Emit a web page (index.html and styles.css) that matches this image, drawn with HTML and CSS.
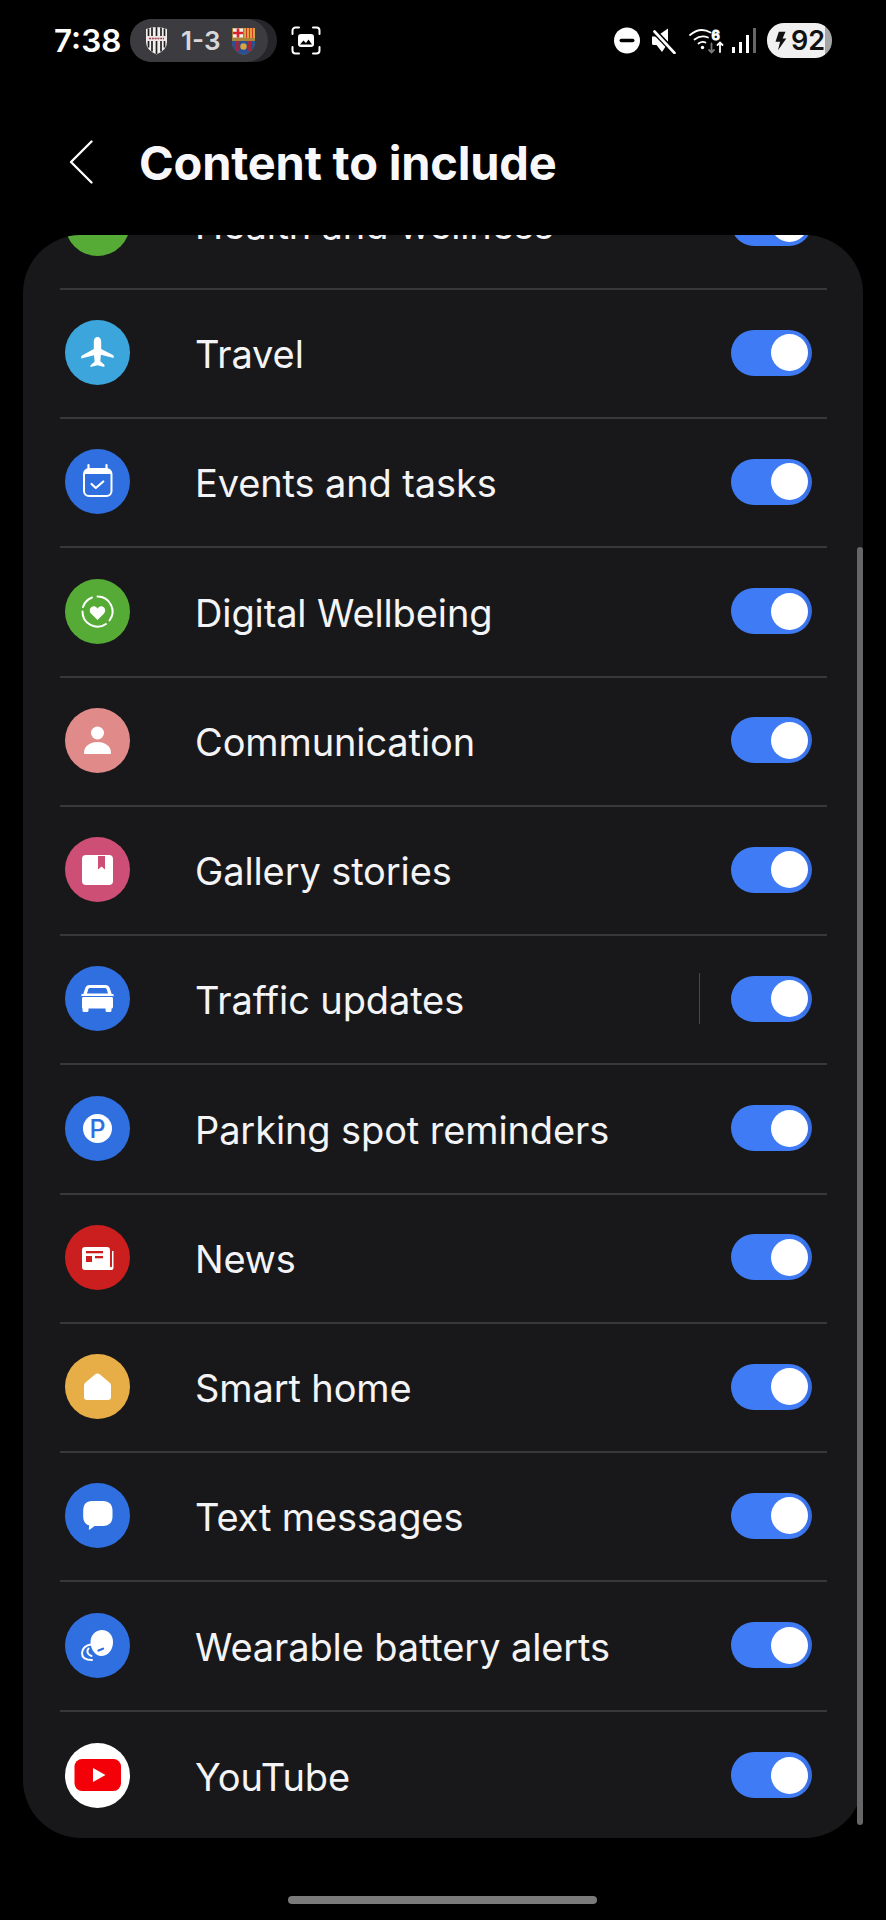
FILE: index.html
```html
<!DOCTYPE html>
<html lang="en">
    <head>
        <meta charset="UTF-8">
        <meta name="viewport" content="width=device-width, initial-scale=1.0">
        <title>Content to include</title>
        <link rel="stylesheet" href="styles.css">
    </head>

    <body>
        <div class="status-bar">
            <span class="time">7:38</span>
            <div class="score-pill">
                <div class="score-inner">
                    <svg class="crest" width="23" height="29" viewBox="0 0 23 29">
                        <path d="M1 3 Q11.5 -1 22 3 V16 Q22 24 11.5 28.5 Q1 24 1 16 Z" fill="#f4f0f0"/>
                        <path d="M3.5 2.5v19M7 1.5v24M11.5 1v27M16 1.5v24M19.5 2.5v19" stroke="#222" stroke-width="1.7"/>
                        <rect x="1.5" y="10" width="20" height="5" fill="#efe3e3"/>
                        <path d="M4 12.5h15" stroke="#a04050" stroke-width="1.6" stroke-dasharray="2 .8"/>
                    </svg>
                    <span class="score">1-3</span>
                    <svg class="crest" width="25" height="28" viewBox="0 0 25 28">
                        <path d="M1 1 H24 V15 Q24 24 12.5 28 Q1 24 1 15 Z" fill="#a8843a"/>
                        <rect x="2" y="1.5" width="10" height="9" fill="#f5f1ee"/>
                        <path d="M7 1.5v9M2 6h10" stroke="#d8242c" stroke-width="2.6"/>
                        <rect x="13.5" y="1" width="10" height="10" fill="#efc04a"/>
                        <path d="M15.5 1v10M18.5 1v10M21.5 1v10" stroke="#cf3a2a" stroke-width="1.5"/>
                        <path d="M1 14 H24 V16 Q24 24 12.5 28 Q1 24 1 16 Z" fill="#2a4f92"/>
                        <path d="M6 14v10M18.5 14v10" stroke="#a3263a" stroke-width="3.4"/>
                        <circle cx="12.5" cy="19.5" r="3.2" fill="#d9a63c"/>
                    </svg>
                </div>
            </div>
            <svg class="capture-icon" width="30" height="29" viewBox="0 0 30 29" fill="none" stroke="#fff" stroke-width="2" stroke-linecap="round">
                <path d="M1.5 8V4.5A3 3 0 0 1 4.500 1.500H8M22 1.500h3.500a3 3 0 0 1 3 3V8M28.500 21v3.500a3 3 0 0 1-3 3H22M8 27.500H4.500a3 3 0 0 1-3-3V21"/>
                <path d="M7 11a3 3 0 0 1 3-3h10a3 3 0 0 1 3 3v7a3 3 0 0 1-3 3H10a3 3 0 0 1-3-3z" fill="#fff" stroke="none"/>
                <path d="M9 18.500l3.500-4 2.500 2.500 2.500-3.500 3.500 5z" fill="#000" stroke="none"/>
            </svg>

            <div class="status-right">
                <svg width="26" height="27" viewBox="0 0 26 27">
                    <circle cx="13" cy="13.500" r="13" fill="#fff"/>
                    <rect x="5.500" y="11.800" width="15" height="3.400" rx="1.700" fill="#000"/>
                </svg>
                <svg class="mute-icon" width="25" height="26" viewBox="0 0 25 26">
                    <path d="M1 8.500h4.500L17 0.500V15L11 24 5.500 17H2.500A1.500 1.500 0 0 1 1 15.500z" fill="#fff"/>
                    <path d="M2 2L25 26" stroke="#000" stroke-width="5.500"/>
                    <path d="M3.500 3.500L23.500 25" stroke="#fff" stroke-width="2.600" stroke-linecap="round"/>
                </svg>
                <svg class="wifi-icon" width="36" height="26" viewBox="0 0 36 26" fill="none" stroke="#fff" stroke-linecap="round">
                    <path d="M1 7Q11 -1.500 21.500 4.500" stroke-width="1.800"/>
                    <path d="M5.500 11.500Q12 6.500 19 9.500" stroke-width="1.800"/>
                    <path d="M9.500 15.500Q13 13 16.500 14.500" stroke-width="1.800"/>
                    <circle cx="13.500" cy="19.500" r="1.700" fill="#fff" stroke="none"/>
                    <path d="M22.500 15.500v9M20 22l2.500 2.500 2.500-2.500" stroke="#777" stroke-width="1.800"/>
                    <path d="M31 24v-9.500M28.500 17l2.500-2.500 2.500 2.500" stroke-width="1.800"/>
                    <text x="22.500" y="12" class="wifi-six">6</text>
                </svg>
                <div class="signal">
                    <span class="bar bar-1"></span>
                    <span class="bar bar-2"></span>
                    <span class="bar bar-3"></span>
                    <span class="bar bar-4"></span>
                </div>
                <div class="battery">
                    <svg width="13" height="20" viewBox="0 0 14 24">
                        <path d="M5 1h8L9.500 9H14L4 23l2.500-10H1z" fill="#111"/>
                    </svg>
                    <span class="battery-text">92</span>
                </div>
            </div>
        </div>

        <div class="header">
            <svg class="back" width="24" height="44" viewBox="0 0 24 44" fill="none" stroke="#fff" stroke-width="2.300" stroke-linecap="round" stroke-linejoin="round">
                <path d="M22.500 1.500L2 22l20.500 20.500"/>
            </svg>
            <h1 class="title">Content to include</h1>
        </div>

        <div class="panel">
            <div class="list">
                <div class="row">
                    <div class="icon green"></div>
                    <span class="label">Health and wellness</span>
                    <div class="toggle"><div class="thumb"></div></div>
                </div>

                <div class="row">
                    <div class="icon sky">
                        <svg width="65" height="65" viewBox="0 0 65 65">
                            <path d="M32.500 17c-2.200 0-3.700 2-3.700 4.500V29L17 35.500c-.6.400-.8 1-.8 1.600v1.400l12.800-3.300.6 6.500-4.100 3.500V47l6.900-1.700L39.400 47v-2.300l-4.100-3.500.6-6.500 12.800 3.300v-1.400c0-.6-.2-1.200-.8-1.600L36.200 29v-7.500c0-2.500-1.500-4.500-3.700-4.500z" fill="#fff"/>
                        </svg>
                    </div>
                    <span class="label">Travel</span>
                    <div class="toggle"><div class="thumb"></div></div>
                </div>

                <div class="row">
                    <div class="icon blue">
                        <svg width="65" height="65" viewBox="0 0 65 65" fill="none">
                            <path d="M23.500 16v5M41.500 16v5" stroke="#fff" stroke-width="2.200" stroke-linecap="round"/>
                            <rect x="19" y="20" width="27.500" height="27" rx="5" stroke="#fff" stroke-width="2"/>
                            <path d="M19 25a5 5 0 0 1 5-5h17.500a5 5 0 0 1 5 5z" fill="#fff"/>
                            <path d="M26.500 35l4.300 4 7.500-6.500" stroke="#fff" stroke-width="2.200" stroke-linecap="round" stroke-linejoin="round"/>
                        </svg>
                    </div>
                    <span class="label">Events and tasks</span>
                    <div class="toggle"><div class="thumb"></div></div>
                </div>

                <div class="row">
                    <div class="icon green">
                        <svg width="65" height="65" viewBox="0 0 65 65" fill="none">
                            <path d="M32.500 17.500a15 15 0 0 1 12 24M41 45a15 15 0 0 1-23.500-12.500M18 28a15 15 0 0 1 9-9.500" stroke="#fff" stroke-width="2" stroke-linecap="round"/>
                            <path d="M32.500 41l-6.300-6.200c-3.400-3.600 0-8.500 3.800-7.300 1 .3 1.900 1 2.500 2 .6-1 1.500-1.700 2.500-2 3.800-1.200 7.200 3.700 3.800 7.300z" fill="#fff"/>
                        </svg>
                    </div>
                    <span class="label">Digital Wellbeing</span>
                    <div class="toggle"><div class="thumb"></div></div>
                </div>

                <div class="row">
                    <div class="icon rose">
                        <svg width="65" height="65" viewBox="0 0 65 65">
                            <circle cx="32.500" cy="25" r="6.500" fill="#fff"/>
                            <path d="M20 46c-.5 0-1-.4-1-1 0-7 6-11 13.500-11S46 38 46 45c0 .6-.5 1-1 1z" fill="#fff"/>
                        </svg>
                    </div>
                    <span class="label">Communication</span>
                    <div class="toggle"><div class="thumb"></div></div>
                </div>

                <div class="row">
                    <div class="icon magenta">
                        <svg width="65" height="65" viewBox="0 0 65 65">
                            <rect x="17" y="18" width="31" height="30" rx="4" fill="#fff"/>
                            <path d="M33 19h7v13.500l-3.500-3-3.500 3z" fill="#cd4f75"/>
                        </svg>
                    </div>
                    <span class="label">Gallery stories</span>
                    <div class="toggle"><div class="thumb"></div></div>
                </div>

                <div class="row">
                    <div class="icon blue">
                        <svg width="65" height="65" viewBox="0 0 65 65">
                            <path d="M24.500 19h16c2 0 3.500 1.200 4.200 3l2 6H48.500v3h-1.200c.5.700.7 1.500.7 2.300V41a1.500 1.500 0 0 1-1.500 1.500v2a1.500 1.500 0 0 1-1.500 1.500h-3a1.500 1.500 0 0 1-1.500-1.500v-2h-17v2a1.500 1.500 0 0 1-1.500 1.500h-3a1.500 1.500 0 0 1-1.500-1.500v-2A1.500 1.500 0 0 1 17 41v-7.700c0-.8.200-1.600.7-2.300h-1.200v-3h1.800l2-6c.7-1.800 2.200-3 4.200-3z" fill="#fff"/>
                            <path d="M25 22h15c.8 0 1.400.4 1.700 1.200l1.300 4.300H22l1.300-4.300c.3-.8.900-1.200 1.700-1.200z" fill="#2f6fe0"/>
                            <path d="M16.500 30.500h32" stroke="#2f6fe0" stroke-width="1.200"/>
                        </svg>
                    </div>
                    <span class="label">Traffic updates</span>
                    <span class="row-sep"></span>
                    <div class="toggle"><div class="thumb"></div></div>
                </div>

                <div class="row">
                    <div class="icon blue">
                        <svg width="65" height="65" viewBox="0 0 65 65">
                            <circle cx="32.500" cy="32.500" r="14.500" fill="#fff"/>
                            <text x="32.500" y="41.500" class="parking-p">P</text>
                        </svg>
                    </div>
                    <span class="label">Parking spot reminders</span>
                    <div class="toggle"><div class="thumb"></div></div>
                </div>

                <div class="row">
                    <div class="icon red">
                        <svg width="65" height="65" viewBox="0 0 65 65">
                            <path d="M20 22h22a3 3 0 0 1 3 3v16c0 .8.500 1.300 1 1.300s1-.5 1-1.300V26h1.500v17a2 2 0 0 1-2 2H20a3 3 0 0 1-3-3V25a3 3 0 0 1 3-3z" fill="#fff"/>
                            <rect x="21" y="26" width="17" height="2.300" fill="#cb1f1f"/>
                            <rect x="21" y="31" width="6" height="6" fill="#cb1f1f"/>
                            <rect x="30" y="31" width="8" height="2.300" fill="#cb1f1f"/>
                        </svg>
                    </div>
                    <span class="label">News</span>
                    <div class="toggle"><div class="thumb"></div></div>
                </div>

                <div class="row">
                    <div class="icon amber">
                        <svg width="65" height="65" viewBox="0 0 65 65">
                            <path d="M30 20.500a3.800 3.800 0 0 1 5 0l9.500 8a4 4 0 0 1 1.500 3V43a3 3 0 0 1-3 3H22a3 3 0 0 1-3-3V31.500a4 4 0 0 1 1.500-3z" fill="#fff"/>
                        </svg>
                    </div>
                    <span class="label">Smart home</span>
                    <div class="toggle"><div class="thumb"></div></div>
                </div>

                <div class="row">
                    <div class="icon blue">
                        <svg width="65" height="65" viewBox="0 0 65 65">
                            <path d="M27 18h11c6 0 9.500 3.500 9.500 9.500v6c0 6-3.500 9.500-9.500 9.500H29.500l-4.500 3.500c-.6.400-1.300 0-1.200-.7l.4-3.300c-4-1.300-6-4.400-6-9v-6C18.500 21.500 21 18 27 18z" fill="#fff"/>
                        </svg>
                    </div>
                    <span class="label">Text messages</span>
                    <div class="toggle"><div class="thumb"></div></div>
                </div>

                <div class="row">
                    <div class="icon blue">
                        <svg width="65" height="65" viewBox="0 0 65 65" fill="none">
                            <path d="M26 31.500c-5 .5-9 4-9 8.500s4 7 10 7" stroke="#fff" stroke-width="2" stroke-linecap="round"/>
                            <path d="M23.500 35.500c-2 2-1.500 6 3 7.500" stroke="#fff" stroke-width="2" stroke-linecap="round"/>
                            <path d="M25.500 29c0-7 5-12 11.500-12 6.500 0 11 5 11 12 0 8-5 14-12 14-5 0-10.500-6-10.500-14z" fill="#fff"/>
                            <path d="M33.500 37.500l4.500-1.800" stroke="#2f6fe0" stroke-width="2.200" stroke-linecap="round"/>
                        </svg>
                    </div>
                    <span class="label">Wearable battery alerts</span>
                    <div class="toggle"><div class="thumb"></div></div>
                </div>

                <div class="row">
                    <div class="icon white">
                        <svg width="65" height="65" viewBox="0 0 65 65">
                            <rect x="9.500" y="16" width="46.500" height="32" rx="7.500" fill="#f40009"/>
                            <path d="M28 25l12.500 7-12.500 7z" fill="#fff"/>
                        </svg>
                    </div>
                    <span class="label">YouTube</span>
                    <div class="toggle"><div class="thumb"></div></div>
                </div>
            </div>
        </div>

        <div class="scrollbar"></div>
        <div class="home-bar"></div>
    </body>
</html>
```

FILE: styles.css
```css
* {
    box-sizing: border-box;
}

body {
    margin: 0;
    width: 886px;
    height: 1920px;
    overflow: hidden;
    background-color: #000;
    color: #fff;
    font-family: 'Inter', 'Liberation Sans', sans-serif;
}

/* status bar */
.status-bar {
    display: flex;
    align-items: center;
    height: 81px;
    padding: 0 54px 0 54px;
}

.time {
    font-size: 31.5px;
    font-weight: 600;
    width: 76px;
}

.score-pill {
    width: 147px;
    height: 43px;
    border-radius: 22px;
    background-color: #26262a;
}

.score-inner {
    display: flex;
    align-items: center;
    width: 138px;
    height: 43px;
    padding-left: 15px;
    border-radius: 22px;
    background-color: #3b3b40;
}

.score {
    font-size: 26px;
    font-weight: 600;
    color: #d8d8da;
    margin: 0 11px 0 13px;
}

.capture-icon {
    margin-left: 14px;
}

.status-right {
    display: flex;
    align-items: center;
    margin-left: auto;
}

.mute-icon {
    margin-left: 11px;
}

.wifi-icon {
    margin-left: 13px;
}

.wifi-six {
    font-size: 13px;
    font-weight: 600;
    fill: #fff;
}

.signal {
    display: flex;
    align-items: flex-end;
    gap: 4px;
    height: 25px;
    margin-left: 7px;
}

.bar {
    width: 3px;
    background-color: #fff;
}

.bar-1 {
    height: 6px;
}

.bar-2 {
    height: 11px;
}

.bar-3 {
    height: 18px;
}

.bar-4 {
    height: 25px;
    background-color: #666;
}

.battery {
    display: flex;
    align-items: center;
    justify-content: center;
    gap: 4px;
    width: 65px;
    height: 35px;
    margin-left: 11px;
    border-radius: 17px;
    background: linear-gradient(to right, #f0f0f0 90%, #a5a5a5 90%);
}

.battery-text {
    font-size: 27px;
    font-weight: 600;
    color: #111;
}

/* header */
.header {
    display: flex;
    align-items: center;
    height: 154px;
    padding: 8px 0 0 69px;
}

.back {
    flex: none;
}

.title {
    margin: 0 0 0 46px;
    font-size: 47px;
    font-weight: 700;
    letter-spacing: -0.2px;
    color: #f8f8fa;
}

/* list */
.panel {
    height: 1603px;
    margin: 0 23px 0 23px;
    border-radius: 58px;
    background-color: #18181a;
    overflow: hidden;
}

.list {
    margin: -74.3px 36px 0 37px;
}

.row {
    display: flex;
    align-items: center;
    height: 129.26px;
    padding: 0 15px 2px 5px;
    border-bottom: 2px solid #38383a;
}

.row:last-child {
    border-bottom: none;
}

.icon {
    flex: none;
    width: 65px;
    height: 65px;
    margin-right: 65px;
    border-radius: 50%;
}

.icon svg {
    display: block;
}

.sky {
    background-color: #3ca6dc;
}

.blue {
    background-color: #2f6fe0;
}

.green {
    background-color: #55ab35;
}

.rose {
    background-color: #e08a8a;
}

.magenta {
    background-color: #cd4f75;
}

.red {
    background-color: #cb1f1f;
}

.amber {
    background-color: #e7ae47;
}

.white {
    background-color: #fff;
}

.parking-p {
    font-size: 25px;
    font-weight: 500;
    text-anchor: middle;
    fill: #2f6fe0;
}

.label {
    flex: 1;
    padding-top: 3px;
    font-size: 38px;
    letter-spacing: -0.12px;
    color: #f4f4f6;
}

.row-sep {
    width: 1px;
    height: 51px;
    margin-right: 31px;
    background-color: #48484a;
}

.toggle {
    flex: none;
    display: flex;
    align-items: center;
    justify-content: flex-end;
    width: 81px;
    height: 46px;
    padding-right: 4px;
    border-radius: 23px;
    background: linear-gradient(to right, #3e7bf5 85%, #3569dc 100%);
}

.thumb {
    width: 37px;
    height: 37px;
    border-radius: 50%;
    background-color: #fff;
}

/* overlays */
.scrollbar {
    position: absolute;
    top: 547px;
    left: 857px;
    width: 6px;
    height: 1278px;
    border-radius: 3px;
    background-color: #666;
}

.home-bar {
    position: absolute;
    top: 1896px;
    left: 288px;
    width: 309px;
    height: 8px;
    border-radius: 4px;
    background-color: #7a7a7a;
}
```
